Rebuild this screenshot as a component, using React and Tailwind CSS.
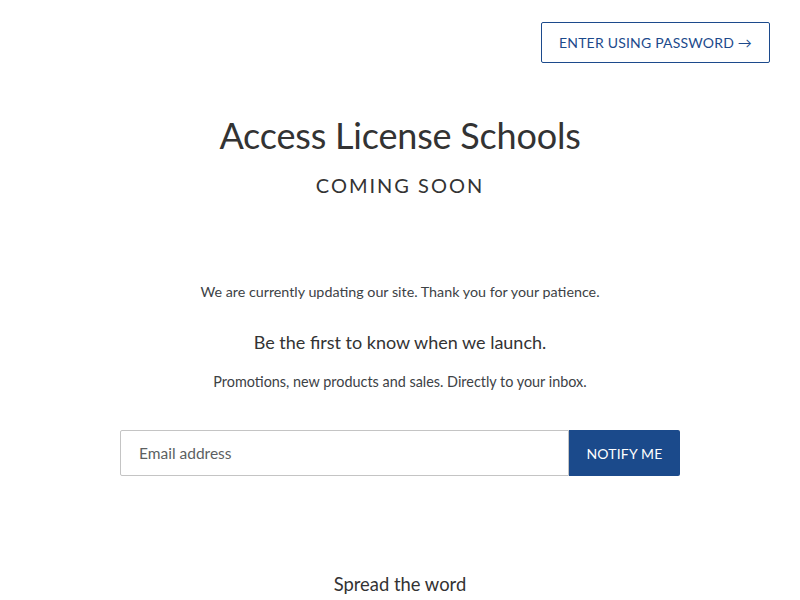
import React from "react";

export default function App() {
  return (
    <div className="min-h-[600px] w-full bg-white text-[#3d4246] font-['Lato','Noto_Sans',sans-serif]">
      <header className="flex justify-end px-[30px] pt-[22px]">
        <button className="h-[41px] w-[229px] rounded-[2px] border border-[#1c4a8c] text-[14px] uppercase tracking-[0.2px] text-[#1c4a8c]">
          Enter using password &rarr;
        </button>
      </header>

      <main className="flex flex-col items-center">
        <h1 className="mt-[50px] text-[36px] leading-[44px] tracking-[-0.2px] text-[#333333]">
          Access License Schools
        </h1>
        <h2 className="mt-[16px] text-[20px] leading-[24px] uppercase tracking-[2px] text-[#333333]">
          Coming soon
        </h2>

        <p className="mt-[83px] text-[14.3px] leading-[24px]">
          We are currently updating our site. Thank you for your patience.
        </p>

        <h3 className="mt-[25px] text-[18px] leading-[26px] text-[#333333]">
          Be the first to know when we launch.
        </h3>
        <p className="mt-[15px] text-[14.4px] leading-[24px]">
          Promotions, new products and sales. Directly to your inbox.
        </p>

        <form className="mt-[36px] flex w-[560px]" onSubmit={(e) => e.preventDefault()}>
          <input
            type="email"
            placeholder="Email address"
            className="h-[46px] flex-1 rounded-l-[2px] border border-[#c4c4c4] px-[18px] text-[15.5px] text-[#3d4246] placeholder:text-[#5c5f62] outline-none"
          />
          <button className="h-[46px] w-[111px] rounded-r-[2px] bg-[#1b4a8b] text-[14px] uppercase tracking-[0.2px] text-white">
            Notify me
          </button>
        </form>

        <h4 className="mt-[95px] text-[18.4px] leading-[26px] text-[#333333]">
          Spread the word
        </h4>
      </main>
    </div>
  );
}
